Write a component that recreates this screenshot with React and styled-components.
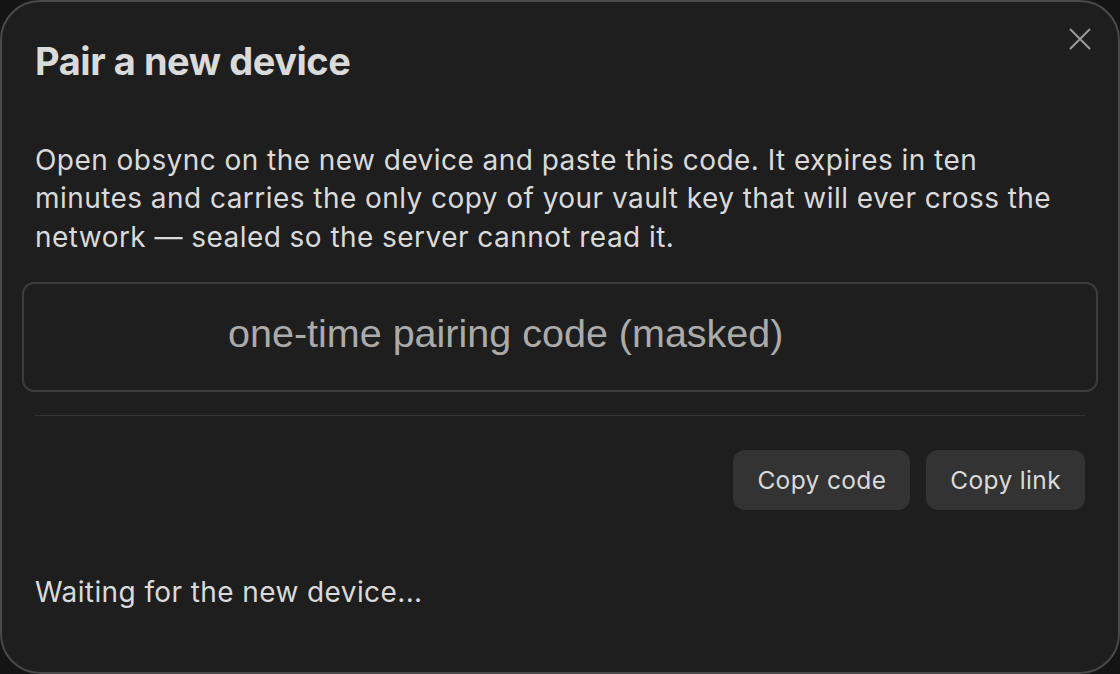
import React from "react";
import styled, { createGlobalStyle } from "styled-components";

const Global = createGlobalStyle`
  html, body { margin: 0; padding: 0; background: #141414; }
  * { box-sizing: border-box; }
`;

const Modal = styled.div`
  position: relative;
  width: 1120px;
  height: 674px;
  background: #1e1e1e;
  border: 2px solid #4a4a4a;
  border-radius: 40px;
  padding: 36px 33px 0 33px;
  display: flex;
  flex-direction: column;
  font-family: Inter, "Noto Sans", sans-serif;
  color: #dadada;
`;

const Title = styled.h1`
  margin: 0;
  font-size: 38px;
  line-height: 46px;
  font-weight: 700;
  color: #dadada;
  letter-spacing: -0.45px;
`;

const CloseButton = styled.button`
  position: absolute;
  top: 23px;
  right: 24px;
  width: 28px;
  height: 28px;
  padding: 0;
  border: none;
  background: transparent;
  color: #9a9a9a;
  display: flex;
  align-items: center;
  justify-content: center;
  cursor: pointer;
`;

const Description = styled.p`
  margin: 57px 0 0 0;
  font-size: 28px;
  line-height: 38.4px;
  letter-spacing: 0.45px;
  color: #dadada;
`;

const CodeBox = styled.div`
  margin: 26px -13px 0 -13px;
  height: 110px;
  border: 2px solid #3c3c3c;
  border-radius: 12px;
  background: #1e1e1e;
  display: flex;
  align-items: center;
  padding: 0 0 8px 204px;
  font-family: "Liberation Sans", Arial, sans-serif;
  font-size: 39.5px;
  color: #ababab;
`;

const Divider = styled.hr`
  margin: 23px 0 0 0;
  border: none;
  height: 1px;
  background: #363636;
`;

const Actions = styled.div`
  margin-top: 34px;
  display: flex;
  justify-content: flex-end;
  gap: 16px;
`;

const Button = styled.button`
  height: 60px;
  padding: 0 24px;
  border: none;
  border-radius: 12px;
  background: #333333;
  color: #dadada;
  font-family: Inter, "Noto Sans", sans-serif;
  font-size: 24.5px;
  letter-spacing: 0.35px;
  cursor: pointer;
`;

const Status = styled.p`
  margin: 62px 0 0 0;
  font-size: 28px;
  line-height: 40px;
  letter-spacing: 0.4px;
  color: #dadada;
`;

export default function App() {
  return (
    <>
      <Global />
      <Modal>
        <CloseButton aria-label="Close">
          <svg width="22" height="22" viewBox="0 0 22 22" fill="none" stroke="currentColor" strokeWidth="2" strokeLinecap="round">
            <path d="M1.5 1.5 L20.5 20.5 M20.5 1.5 L1.5 20.5" />
          </svg>
        </CloseButton>
        <Title>Pair a new device</Title>
        <Description>
          Open obsync on the new device and paste this code. It expires in ten minutes and carries the only copy of your vault key that will ever cross the network — sealed so the server cannot read it.
        </Description>
        <CodeBox>one-time pairing code (masked)</CodeBox>
        <Divider />
        <Actions>
          <Button>Copy code</Button>
          <Button>Copy link</Button>
        </Actions>
        <Status>Waiting for the new device...</Status>
      </Modal>
    </>
  );
}
